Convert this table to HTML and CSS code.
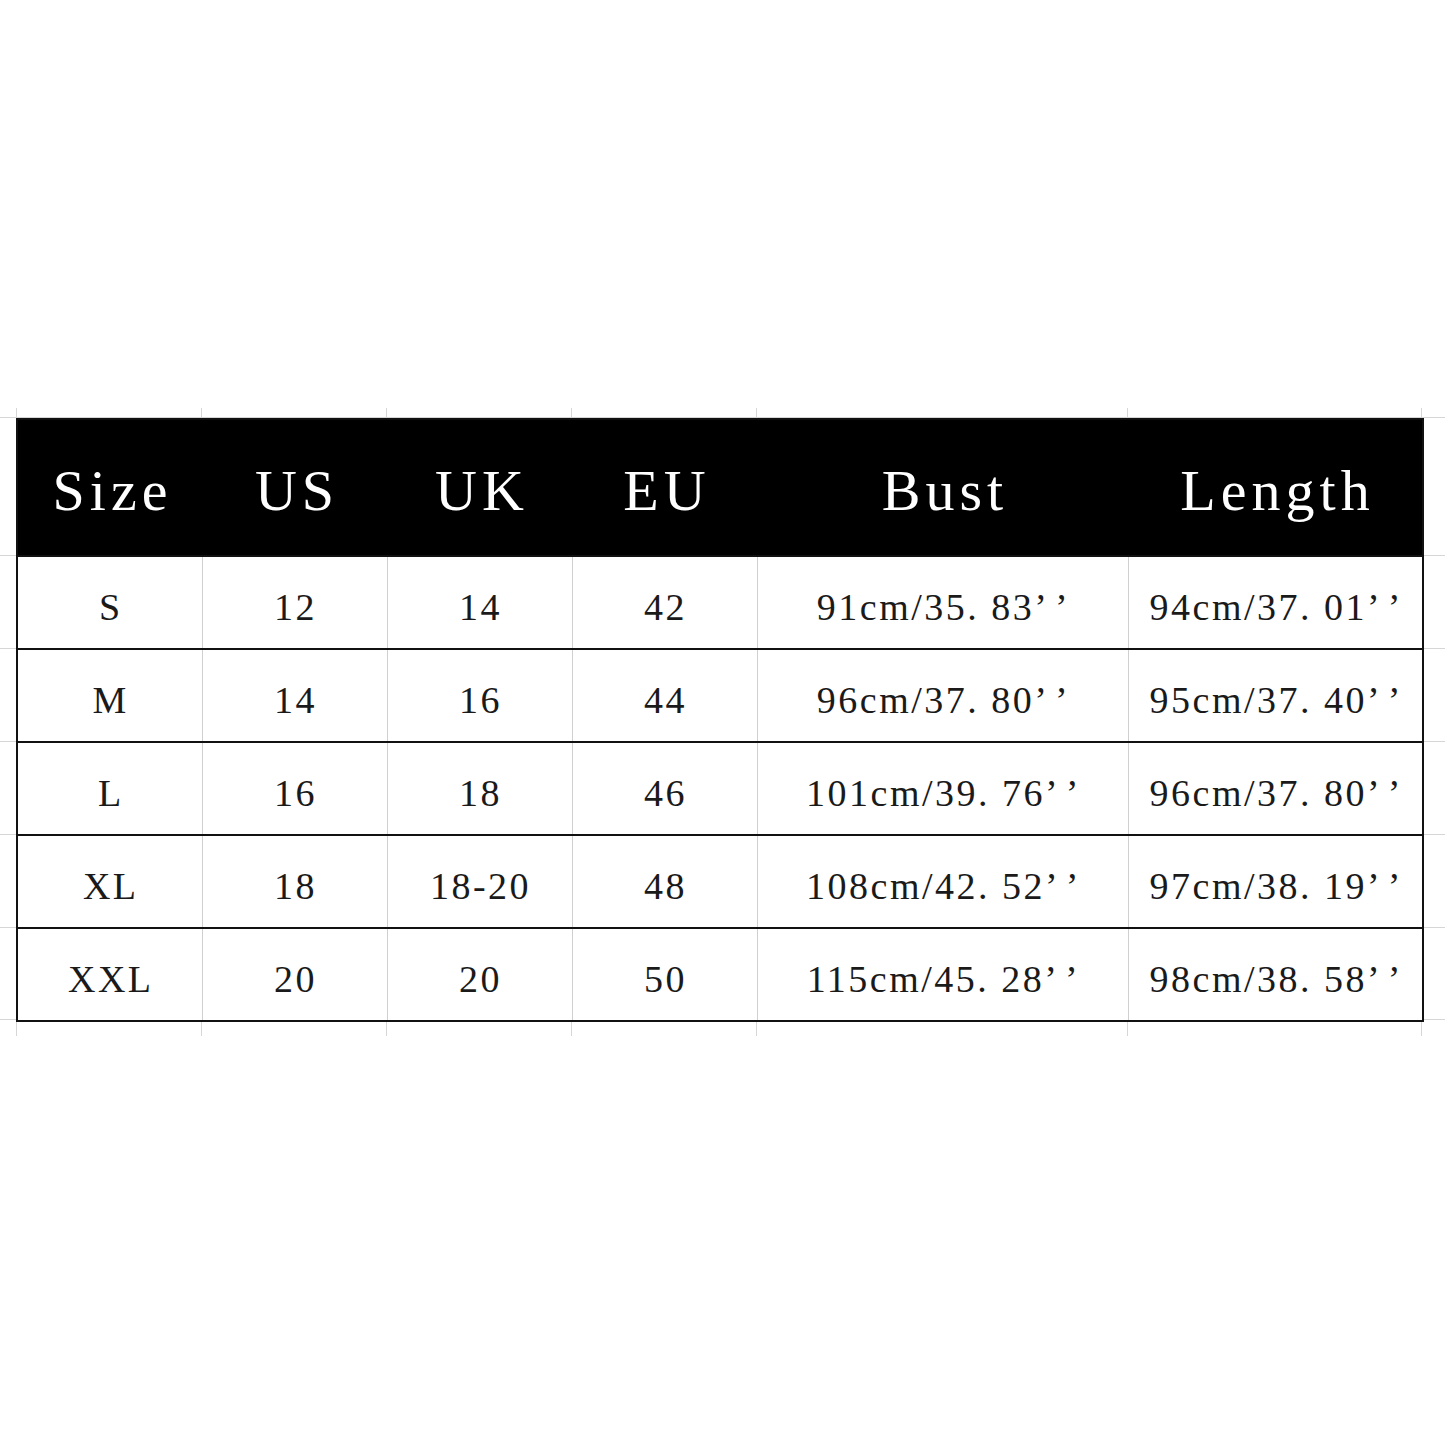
FILE: index.html
```html
<!DOCTYPE html>
<html lang="en">
<head>
<meta charset="utf-8">
<title>Size Chart</title>
<link rel="stylesheet" href="styles.css">
</head>
<body>
<div class="sheet">
  <table class="chart">
    <colgroup>
      <col class="c-narrow"><col class="c-narrow"><col class="c-narrow"><col class="c-narrow"><col class="c-bust"><col class="c-length">
    </colgroup>
    <thead>
      <tr><th>Size</th><th>US</th><th>UK</th><th>EU</th><th>Bust</th><th>Length</th></tr>
    </thead>
    <tbody>
      <tr><td>S</td><td>12</td><td>14</td><td>42</td><td>91cm/35. 83’&#8202;’</td><td>94cm/37. 01’&#8202;’</td></tr>
      <tr><td>M</td><td>14</td><td>16</td><td>44</td><td>96cm/37. 80’&#8202;’</td><td>95cm/37. 40’&#8202;’</td></tr>
      <tr><td>L</td><td>16</td><td>18</td><td>46</td><td>101cm/39. 76’&#8202;’</td><td>96cm/37. 80’&#8202;’</td></tr>
      <tr><td>XL</td><td>18</td><td>18-20</td><td>48</td><td>108cm/42. 52’&#8202;’</td><td>97cm/38. 19’&#8202;’</td></tr>
      <tr><td>XXL</td><td>20</td><td>20</td><td>50</td><td>115cm/45. 28’&#8202;’</td><td>98cm/38. 58’&#8202;’</td></tr>
    </tbody>
  </table>
</div>
</body>
</html>
```
FILE: styles.css
```css
html, body {
  margin: 0;
  padding: 0;
  background: #ffffff;
}

.sheet {
  margin-top: 408px;
  padding: 10px 23px 16px 16px;
  height: 602px;
  background-image:
    linear-gradient(to right,
      transparent 16px, #d6d6d6 16px, #d6d6d6 17px, transparent 17px,
      transparent 201px, #d6d6d6 201px, #d6d6d6 202px, transparent 202px,
      transparent 386px, #d6d6d6 386px, #d6d6d6 387px, transparent 387px,
      transparent 571px, #d6d6d6 571px, #d6d6d6 572px, transparent 572px,
      transparent 756px, #d6d6d6 756px, #d6d6d6 757px, transparent 757px,
      transparent 1127px, #d6d6d6 1127px, #d6d6d6 1128px, transparent 1128px,
      transparent 1421px, #d6d6d6 1421px, #d6d6d6 1422px, transparent 1422px),
    linear-gradient(to bottom,
      transparent 9px, #d6d6d6 9px, #d6d6d6 10px, transparent 10px,
      transparent 147px, #d6d6d6 147px, #d6d6d6 148px, transparent 148px,
      transparent 240px, #d6d6d6 240px, #d6d6d6 241px, transparent 241px,
      transparent 333px, #d6d6d6 333px, #d6d6d6 334px, transparent 334px,
      transparent 426px, #d6d6d6 426px, #d6d6d6 427px, transparent 427px,
      transparent 519px, #d6d6d6 519px, #d6d6d6 520px, transparent 520px,
      transparent 611px, #d6d6d6 611px, #d6d6d6 612px, transparent 612px);
}

.chart {
  width: 1406px;
  border-collapse: collapse;
  table-layout: fixed;
  background: #ffffff;
  border: 2px solid #111111;
}

.c-narrow { width: 185px; }
.c-bust { width: 371px; }
.c-length { width: 295px; }

.chart th {
  height: 129px;
  padding: 6px 0 0 5px;
  background: #000000;
  color: #ffffff;
  font-family: "Liberation Serif", "Times New Roman", serif;
  font-weight: normal;
  font-size: 58px;
  letter-spacing: 5px;
  text-align: center;
  vertical-align: middle;
  line-height: 1;
  border: 0;
}

.chart td {
  height: 93px;
  padding: 8px 0 0 2px;
  box-sizing: border-box;
  color: #1a1a1a;
  font-family: "Liberation Serif", "Times New Roman", serif;
  font-size: 38px;
  letter-spacing: 2.5px;
  text-align: center;
  vertical-align: middle;
  line-height: 1;
  border-top: 2px solid #111111;
  border-left: 1px solid #d0d0d0;
  border-right: 1px solid #d0d0d0;
}

.chart td:first-child { border-left: 2px solid #111111; }
.chart td:last-child { border-right: 2px solid #111111; }
.chart tbody tr:last-child td { border-bottom: 2px solid #111111; }
```
